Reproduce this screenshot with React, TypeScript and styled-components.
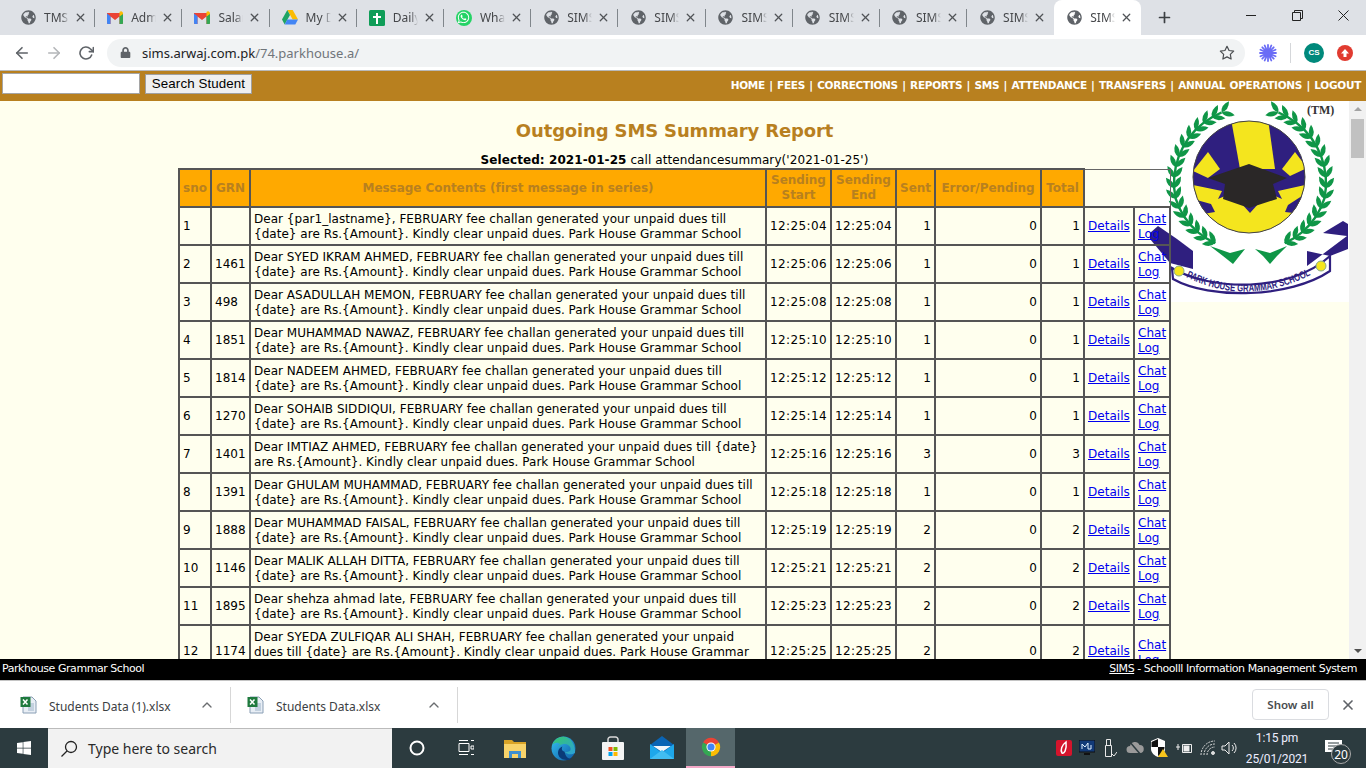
import React from "react";
import styled, { createGlobalStyle } from "styled-components";
import { FaGlobeAmericas, FaWhatsapp, FaLock, FaWindows } from "react-icons/fa";
import { FiArrowLeft, FiArrowRight, FiRotateCw, FiStar, FiX, FiPlus, FiChevronUp } from "react-icons/fi";

const Global = createGlobalStyle`
  html, body { margin: 0; padding: 0; height: 100%; overflow: hidden; background: #fff; }
  #root { height: 100%; }
  * { box-sizing: border-box; }
`;

const Frame = styled.div`
  height: 768px; width: 1366px; display: flex; flex-direction: column; overflow: hidden;
  font-family: "Noto Sans", "Open Sans", sans-serif;
`;
const TabStrip = styled.div`
  height: 35px; flex: none; background: #dee1e6; display: flex; align-items: stretch; padding: 0 0 0 8px; position: relative;
`;
const Tab = styled.div<{ $active?: boolean; $last?: boolean }>`
  width: 87.2px; flex: none; display: flex; align-items: center; padding-left: 12px; position: relative;
  background: ${(p) => (p.$active ? "#fff" : "transparent")};
  border-radius: ${(p) => (p.$active ? "8px 8px 0 0" : "0")};
  &::after {
    content: ""; position: absolute; right: 0; top: 9px; height: 18px; width: 1px;
    background: ${(p) => (p.$last || p.$active ? "transparent" : "#80868b")};
  }
`;
const TabIcon = styled.span`
  width: 16px; height: 16px; display: flex; align-items: center; justify-content: center; flex: none; color: #5f6368;
`;
const TabTitle = styled.span`
  width: 25px; margin-left: 8px; overflow: hidden; white-space: nowrap; font-size: 12px; color: #45474a;
  -webkit-mask-image: linear-gradient(90deg, #000 70%, transparent 100%);
  mask-image: linear-gradient(90deg, #000 70%, transparent 100%);
`;
const TabClose = styled.span`
  margin-left: 5px; display: flex; color: #505357;
`;
const WhatsBadge = styled.span`
  width: 16px; height: 16px; border-radius: 50%; background: #25d366; color: #fff; display: flex; align-items: center; justify-content: center;
`;
const NewTab = styled.span`
  width: 30px; margin-left: 8px; display: flex; align-items: center; justify-content: center; color: #3c4043;
`;
const WinControls = styled.div`
  margin-left: auto; display: flex; align-items: flex-start; height: 100%;
`;
const WinBtn = styled.span`
  width: 46px; height: 30px; display: flex; align-items: center; justify-content: center; color: #222;
`;
const Toolbar = styled.div`
  height: 36px; flex: none; background: #fff; display: flex; align-items: center; padding-left: 12px;
  border-bottom: 1px solid #b9b9b9;
`;
const NavBtn = styled.span<{ $off?: boolean }>`
  width: 20px; margin-right: 12px; display: flex; align-items: center; justify-content: center;
  color: ${(p) => (p.$off ? "#b4b6b9" : "#5f6368")};
`;
const Omnibox = styled.div`
  margin-left: -1px; width: 1138px; height: 28px; border-radius: 14px; background: #f1f3f4; display: flex; align-items: center; padding: 0 10px 0 13px;
  font-size: 13px; color: #202124;
`;
const UrlHost = styled.span`
  margin-left: 11px; color: #202124;
`;
const UrlPath = styled.span`
  color: #70757a;
`;
const OmniStar = styled.span`
  margin-left: auto; display: flex; color: #4a4d50;
`;
const ToolIcons = styled.div`
  display: flex; align-items: center; margin-left: 14px; gap: 0;
`;
const ToolDivider = styled.span`
  width: 1px; height: 20px; background: #d5d7da; margin: 0 13px;
`;
const Avatar = styled.span`
  width: 20px; height: 20px; border-radius: 50%; background: #00897b; color: #fff; font-size: 8px; font-weight: 700; display: flex; align-items: center; justify-content: center; font-family: "Liberation Sans", sans-serif;
`;
const UpCircle = styled.span`
  width: 16px; height: 16px; margin-left: 13px; border-radius: 50%; background: #e13b30; display: flex; align-items: center; justify-content: center;
`;

const Page = styled.div`
  flex: 1; min-height: 0; display: flex; flex-direction: column;
`;
const TopBar = styled.div`
  height: 30px; flex: none; background: #b8801f; display: flex; align-items: center; padding: 0 5px 0 2px; justify-content: space-between;
`;
const SearchForm = styled.form`
  display: flex; align-items: center; gap: 5px; margin: -5px 0 0;
`;
const SearchInput = styled.input`
  width: 138px; height: 21px; border: 1px solid #a5a5a5; background: #fff; padding: 0;
`;
const SearchButton = styled.button`
  height: 20px; width: 107px; padding: 0; border: 1px solid #a0a0a0; background: #efefef; font: 13.33px "Liberation Sans", Arial, sans-serif; color: #000; letter-spacing: .1px;
`;
const Nav = styled.div`
  color: #fff; font: bold 10.5px "DejaVu Sans", Verdana, sans-serif; letter-spacing: -.3px; white-space: nowrap; word-spacing: 1px; margin-top: -2px;
`;
const Body = styled.div`
  flex: 1; min-height: 0; display: flex; background: #ffffee; position: relative;
`;
const Scroller = styled.div`
  flex: 1; min-width: 0; overflow: hidden; position: relative;
`;
const Logo = styled.svg`
  position: absolute; right: 0; top: 0; width: 199px; height: 201px; background: #fff;
`;
const Content = styled.div`
  position: relative; z-index: 1; padding-top: 19px; font: 12px "DejaVu Sans", Verdana, sans-serif; color: #000;
`;
const Title = styled.h1`
  margin: 0; text-align: center; font: bold 18px/22px "DejaVu Sans", Verdana, sans-serif; color: #b8801f; letter-spacing: -.15px;
`;
const Selected = styled.div`
  margin-top: 11px; text-align: center; line-height: 15px; font-size: 12px; height: 15px; letter-spacing: .08px;
`;
const Table = styled.table`
  margin: 0 0 0 178px; width: 991px; table-layout: fixed; border-collapse: collapse; border: 1px solid #666;
  font: 12px/15px "DejaVu Sans", Verdana, sans-serif; letter-spacing: .025px;
`;
const Th = styled.th`
  background: #ffa900; color: #b8801f; border: 2px solid #555; padding: 3px 1px; font-weight: 700; text-align: center; height: 38px; letter-spacing: -.05px;
`;
const Td = styled.td<{ $right?: boolean; $time?: boolean; $multi?: boolean }>`
  border: 2px solid #555; padding: ${(p) => (p.$multi ? "4px 3px 2px" : "3px")}; text-align: ${(p) => (p.$right ? "right" : "left")}; white-space: nowrap; height: 38px; vertical-align: middle; overflow: hidden;
  ${(p) => (p.$time ? "letter-spacing: .4px;" : "")}
`;
const LinkA = styled.a`
  color: #0000ee; text-decoration: underline;
`;
const Scrollbar = styled.div`
  width: 17px; flex: none; background: #f1f1f1; position: relative; display: flex; flex-direction: column; align-items: center;
`;
const ArrowUp = styled.span`
  margin-top: 6px; width: 0; height: 0; border-left: 4px solid transparent; border-right: 4px solid transparent; border-bottom: 4px solid #a3a3a3;
`;
const Thumb = styled.span`
  width: 13px; height: 39px; margin-top: 8px; background: #c1c1c1;
`;
const ArrowDown = styled.span`
  margin-top: auto; margin-bottom: 6px; width: 0; height: 0; border-left: 4px solid transparent; border-right: 4px solid transparent; border-top: 4px solid #505050;
`;
const Footer = styled.div`
  height: 21px; flex: none; background: #000; color: #fff; font: 11px "DejaVu Sans", Verdana, sans-serif; letter-spacing: -.45px; display: flex; align-items: center; justify-content: space-between; padding: 0 9px 2px 2px;
`;
const FootLink = styled.span`
  text-decoration: underline;
`;
const Shelf = styled.div`
  height: 48px; flex: none; background: #fff; border-top: 1px solid #c4c4c4; display: flex; align-items: center;
`;
const ShelfItem = styled.div`
  width: 227px; height: 36px; flex: none; display: flex; align-items: center; padding-left: 16px; border-right: 1px solid #d7d7d7; position: relative; font-size: 12px; color: #3c4043;
  &:first-child { width: 231px; padding-left: 20px; }
`;
const ShelfName = styled.span`
  margin-left: 12px; width: 150px; white-space: nowrap; padding-top: 3px;
`;
const ShelfChevron = styled.span`
  display: flex; color: #6a6d70;
`;
const ShowAll = styled.button`
  margin-left: auto; width: 77px; height: 31px; background: #fff; border: 1px solid #dadce0; border-radius: 4px; font: 600 11.5px "Noto Sans", sans-serif; color: #4a4d50; padding: 0;
`;
const ShelfClose = styled.span`
  width: 37px; display: flex; justify-content: center; color: #5f6368;
`;
const Taskbar = styled.div`
  height: 40px; flex: none; background: #2c3b3f; display: flex; align-items: stretch; color: #fff;
`;
const StartBtn = styled.span`
  width: 48px; display: flex; align-items: center; justify-content: center;
`;
const SearchBox = styled.div`
  width: 344px; background: #f2f2f2; color: #2a2a2a; display: flex; align-items: center; padding-left: 12px; font-size: 14px; border: 1px solid #bbb; border-width: 1px 0 0;
`;
const SearchLabel = styled.span`
  margin-left: 10px;
`;
const TaskIcons = styled.div`
  display: flex; align-items: stretch;
`;
const TaskIcon = styled.span<{ $active?: boolean }>`
  width: 49px; display: flex; align-items: center; justify-content: center; position: relative;
  background: ${(p) => (p.$active ? "#55676b" : "transparent")};
  ${(p) => (p.$active ? "border-bottom: 2px solid #f4a9c8;" : "")}
`;
const Tray = styled.div`
  margin-left: auto; display: flex; align-items: stretch; gap: 0;
`;
const TrayIcon = styled.span<{ $w: number }>`
  width: ${(p) => p.$w}px; display: flex; align-items: center; justify-content: center;
`;
const Clock = styled.div`
  width: 76px; text-align: center; font: 12px/21px Roboto, "Noto Sans", sans-serif; letter-spacing: -.15px; color: #eef; white-space: nowrap;
`;
const Notify = styled.span`
  width: 51px; display: flex; align-items: flex-start; padding: 12px 0 0 10px; position: relative;
`;
const NotifyCount = styled.span`
  position: absolute; left: 16px; top: 16px; width: 20px; height: 20px; border-radius: 50%; background: #2c3b3f; border: 1px solid #aaa; font-size: 12px; display: flex; align-items: center; justify-content: center;
`;

const Globe = () => <FaGlobeAmericas size={15} />;
const Gmail = () => (
  <svg width="16" height="13" viewBox="0 0 16 13">
    <path d="M0 2v10a1 1 0 0 0 1 1h2.500V5.500L8 9l4.500-3.500V13H15a1 1 0 0 0 1-1V2z" fill="#ea4335" />
    <path d="M0 2.500 L0 12a1 1 0 0 0 1 1h2.500V5.200z" fill="#4285f4" />
    <path d="M16 2.500 V12a1 1 0 0 1-1 1h-2.500V5.200z" fill="#34a853" />
    <path d="M16 2.200a2 2 0 0 0-3.200-1.500L12.500 1v4.500L16 3z" fill="#fbbc04" />
  </svg>
);
const Drive = () => (
  <svg width="16" height="15" viewBox="0 0 16 15">
    <path d="M5.300 0h5.400l5.300 9.500h-5.300z" fill="#fbbc04" />
    <path d="M5.300 0 0 9.500 2.700 14.500 8 5z" fill="#1fa463" />
    <path d="M2.700 14.500h10.600L16 9.500H5.300z" fill="#4285f4" />
  </svg>
);
const Sheets = () => (
  <svg width="16" height="16" viewBox="0 0 16 16">
    <rect width="16" height="16" rx="1.500" fill="#0f9d58" />
    <path d="M7 3h2v3h3v2H9v6H7V8H4V6h3z" fill="#fff" />
  </svg>
);
const Whats = () => (
  <WhatsBadge><FaWhatsapp size={13} /></WhatsBadge>
);
const Chrome = () => (
  <svg width="22" height="22" viewBox="0 0 48 48">
    <path d="M24 24 6.680 14A20 20 0 0 1 41.320 14z" fill="#ea4335" />
    <path d="M24 24 41.320 14A20 20 0 0 1 24 44z" fill="#fbbc04" />
    <path d="M24 24V44A20 20 0 0 1 6.680 14z" fill="#34a853" />
    <circle cx="24" cy="24" r="10" fill="#fff" />
    <circle cx="24" cy="24" r="7.800" fill="#4285f4" />
  </svg>
);
const Edge = () => (
  <svg width="25" height="25" viewBox="0 0 24 24">
    <defs>
      <linearGradient id="ed1" x1="0" y1="0" x2="1" y2="1">
        <stop offset="0" stopColor="#35c1f1" />
        <stop offset="1" stopColor="#0c59a4" />
      </linearGradient>
      <linearGradient id="ed2" x1="0" y1="0" x2="1" y2="1">
        <stop offset="0" stopColor="#36c96b" />
        <stop offset="1" stopColor="#2ba0d8" />
      </linearGradient>
    </defs>
    <circle cx="12" cy="12" r="11.500" fill="url(#ed1)" />
    <path d="M6 13c1-5 7-7 11-4 2 1.500 2.500 4 1 5.500-1 1-3.500 1-5 .3 2 2.500 6 4 10 1.500C24 9 19 1 12 .6 6 .6 2 5 1.500 9 2.500 6 7 5.500 9 8 7.500 9 6.300 11 6 13z" fill="url(#ed2)" />
    <path d="M13 15c-3-1-3-3-2-5 -3 1-5 4-4 8 1 3 4 5 8 5 2 0 3.500-.5 5-1.500-3 .8-6-1.500-7-6.500z" fill="#0a3a78" />
  </svg>
);
const Store = () => (
  <svg width="24" height="25" viewBox="0 0 24 25">
    <path d="M7 7V3.500a2.500 2.500 0 0 1 2.500-2.500h5A2.500 2.500 0 0 1 17 3.500V7" fill="none" stroke="#d8d8d8" strokeWidth="1.500" />
    <rect x="1" y="6" width="22" height="18" rx="1" fill="#f4f4f4" />
    <rect x="7.500" y="11" width="4" height="4" fill="#f25022" />
    <rect x="12.500" y="11" width="4" height="4" fill="#7fba00" />
    <rect x="7.500" y="16" width="4" height="4" fill="#00a4ef" />
    <rect x="12.500" y="16" width="4" height="4" fill="#ffb900" />
  </svg>
);
const Mail = () => (
  <svg width="24" height="24" viewBox="0 0 24 24">
    <path d="M0 9 12 0l12 9v14H0z" fill="#0a64b4" />
    <path d="M3 10h18l-9 6z" fill="#f2f6fa" />
    <path d="M0 8l12 9 12-9v15H0z" fill="#1ea7ea" />
    <path d="M0 23l12-9 12 9z" fill="#41bdf2" />
  </svg>
);
const Folder = () => (
  <svg width="22" height="19" viewBox="0 0 22 19">
    <path d="M0 1h8l2 2h12v4H0z" fill="#d9a327" />
    <rect y="5" width="22" height="14" fill="#f8d36a" />
    <path d="M5 12h12v7h-3v-4H8v4H5z" fill="#3d8fd1" />
  </svg>
);
const Excel = () => (
  <svg width="17" height="18" viewBox="0 0 17 18">
    <path d="M3 1h9l4 4v12H3z" fill="#e8eef5" stroke="#8a9fb5" />
    <path d="M8 8h6M8 10h6M8 12h6M8 14h6" stroke="#9db3c9" />
    <rect x="0.500" y="1" width="10" height="10" fill="#1f7a3e" />
    <path d="M3 3.500l4.500 5M7.500 3.500 3 8.500" stroke="#fff" strokeWidth="1.500" />
  </svg>
);

const GREEN = "#0f9647";
const NAVY = "#2f1f7f";
const YELLOW = "#f4e51e";
const LEAF = "M0 0Q6-5 13.500 0Q6 5 0 0z";

function LaurelSide({ mirror }: { mirror?: boolean }) {
  const cx = 100, cy = 82, r = 76;
  const nodes: React.ReactNode[] = [];
  const pts: string[] = [];
  for (let i = 0; i < 17; i++) {
    const th = 22 + i * 8;
    const rad = (th * Math.PI) / 180;
    const rr = r - (i > 10 ? (i - 10) * 1.100 : 0);
    const x = cx - rr * Math.sin(rad);
    const y = cy - rr * Math.cos(rad);
    pts.push(`${x.toFixed(1)} ${y.toFixed(1)}`);
    nodes.push(
      <g key={i} transform={`translate(${x.toFixed(1)} ${y.toFixed(1)}) rotate(${(-th).toFixed(1)})`}>
        <path d={LEAF} transform="rotate(-34)" fill={GREEN} />
        <path d={LEAF} transform="rotate(34)" fill={GREEN} />
      </g>
    );
  }
  return (
    <g transform={mirror ? `translate(${2 * cx} 0) scale(-1 1)` : undefined}>
      <polyline points={pts.join(" ")} fill="none" stroke={GREEN} strokeWidth="2.400" />
      {nodes}
    </g>
  );
}

const NAV = ["HOME", "FEES", "CORRECTIONS", "REPORTS", "SMS", "ATTENDANCE", "TRANSFERS", "ANNUAL OPERATIONS", "LOGOUT"];
const TAIL = "{date} are Rs.{Amount}. Kindly clear unpaid dues. Park House Grammar School";
const H = "FEBRUARY fee challan generated your unpaid dues till";
type Row = { sno: number; grn: string; lines: string[]; t: string; sent: number };
const ROWS: Row[] = [
  { sno: 1, grn: "", lines: [`Dear {par1_lastname}, ${H}`, TAIL], t: "12:25:04", sent: 1 },
  { sno: 2, grn: "1461", lines: [`Dear SYED IKRAM AHMED, ${H}`, TAIL], t: "12:25:06", sent: 1 },
  { sno: 3, grn: "498", lines: [`Dear ASADULLAH MEMON, ${H}`, TAIL], t: "12:25:08", sent: 1 },
  { sno: 4, grn: "1851", lines: [`Dear MUHAMMAD NAWAZ, ${H}`, TAIL], t: "12:25:10", sent: 1 },
  { sno: 5, grn: "1814", lines: [`Dear NADEEM AHMED, ${H}`, TAIL], t: "12:25:12", sent: 1 },
  { sno: 6, grn: "1270", lines: [`Dear SOHAIB SIDDIQUI, ${H}`, TAIL], t: "12:25:14", sent: 1 },
  { sno: 7, grn: "1401", lines: [`Dear IMTIAZ AHMED, ${H} {date}`, "are Rs.{Amount}. Kindly clear unpaid dues. Park House Grammar School"], t: "12:25:16", sent: 3 },
  { sno: 8, grn: "1391", lines: [`Dear GHULAM MUHAMMAD, ${H}`, TAIL], t: "12:25:18", sent: 1 },
  { sno: 9, grn: "1888", lines: [`Dear MUHAMMAD FAISAL, ${H}`, TAIL], t: "12:25:19", sent: 2 },
  { sno: 10, grn: "1146", lines: [`Dear MALIK ALLAH DITTA, ${H}`, TAIL], t: "12:25:21", sent: 2 },
  { sno: 11, grn: "1895", lines: [`Dear shehza ahmad late, ${H}`, TAIL], t: "12:25:23", sent: 2 },
  { sno: 12, grn: "1174", lines: ["Dear SYEDA ZULFIQAR ALI SHAH, FEBRUARY fee challan generated your unpaid", "dues till {date} are Rs.{Amount}. Kindly clear unpaid dues. Park House Grammar", "School"], t: "12:25:25", sent: 2 },
];
const TABS: [React.ReactNode, string][] = [
  [<Globe />, "TMS"], [<Gmail />, "Admin"], [<Gmail />, "Salary"], [<Drive />, "My Drive"], [<Sheets />, "Daily"], [<Whats />, "WhatsApp"],
  [<Globe />, "SIMS"], [<Globe />, "SIMS"], [<Globe />, "SIMS"], [<Globe />, "SIMS"], [<Globe />, "SIMS"], [<Globe />, "SIMS"], [<Globe />, "SIMS"],
];
const COLS = [32, 39, 516, 65, 65, 39, 106, 43, 50, 36];

export default function App() {
  return (
    <Frame>
      <Global />
      <TabStrip>
        {TABS.map(([icon, title], i) => (
          <Tab key={i} $active={i === 12} $last={i === 11}>
            <TabIcon>{icon}</TabIcon>
            <TabTitle>{title}</TabTitle>
            <TabClose><FiX size={13} strokeWidth={2.4} /></TabClose>
          </Tab>
        ))}
        <NewTab><FiPlus size={17} strokeWidth={2.4} /></NewTab>
        <WinControls>
          <WinBtn><svg width="10" height="10"><path d="M0 5.500h10" stroke="#222" /></svg></WinBtn>
          <WinBtn><svg width="11" height="11"><path d="M.5 2.500h8v8h-8zM2.500 2.500v-2h8v8h-2" fill="none" stroke="#222" /></svg></WinBtn>
          <WinBtn><svg width="11" height="11"><path d="M.5.500l10 10M10.500.500l-10 10" stroke="#222" /></svg></WinBtn>
        </WinControls>
      </TabStrip>
      <Toolbar>
        <NavBtn><FiArrowLeft size={18} strokeWidth={2.2} /></NavBtn>
        <NavBtn $off><FiArrowRight size={18} strokeWidth={2.2} /></NavBtn>
        <NavBtn><FiRotateCw size={16} strokeWidth={2.4} /></NavBtn>
        <Omnibox>
          <FaLock size={11} color="#5f6368" />
          <UrlHost>sims.arwaj.com.pk</UrlHost><UrlPath>/74.parkhouse.a/</UrlPath>
          <OmniStar><FiStar size={16} strokeWidth={1.8} /></OmniStar>
        </Omnibox>
        <ToolIcons>
          <svg width="18" height="18" viewBox="0 0 18 18" stroke="#6a6cf6" strokeWidth="1.800" strokeLinecap="round">
            <path d="M9 1v16M1 9h16M3.300 3.300l11.400 11.400M14.700 3.300 3.300 14.700M5.700 1.500l6.600 15M12.300 1.500l-6.600 15M1.500 5.700l15 6.600M1.500 12.300l15-6.600" />
          </svg>
          <ToolDivider />
          <Avatar>CS</Avatar>
          <UpCircle>
            <svg width="10" height="10" viewBox="0 0 10 10"><path d="M5 1 9 5.500H6.500V9h-3V5.500H1z" fill="#fff" /></svg>
          </UpCircle>
        </ToolIcons>
      </Toolbar>
      <Page>
        <TopBar>
          <SearchForm>
            <SearchInput aria-label="Search" />
            <SearchButton type="button">Search Student</SearchButton>
          </SearchForm>
          <Nav>{NAV.join(" | ")}</Nav>
        </TopBar>
        <Body>
          <Scroller>
            <Logo viewBox="0 0 199 201">
              <defs>
                <clipPath id="disc"><circle cx="99" cy="76" r="56" /></clipPath>
                <path id="band" d="M36 176 Q100 208 168 170" fill="none" />
              </defs>
              <LaurelSide />
              <LaurelSide mirror />
              <g clipPath="url(#disc)">
                <rect x="40" y="18" width="120" height="120" fill={NAVY} />
                <path d="M81 18h37l7 50H90z" fill={YELLOW} />
                <path d="M43 70 58 51l12 17-12 9z" fill={YELLOW} />
                <path d="M132 68l13-17 12 16-17 8z" fill={YELLOW} />
                <path d="M43 84l29 6-4 8 14-6 18 20 18-20 14 6-4-8 27-6v50H43z" fill={YELLOW} />
                <path d="M43 98l18 5 4 8-18 3z" fill={NAVY} />
                <path d="M155 93l-17 11-3 7 17 2z" fill={NAVY} />
              </g>
              <circle cx="99" cy="76" r="56" fill="none" stroke="#444" strokeWidth="1" />
              <path d="M99 63 58 77l17 6-2 15 26 9 28-9-4-15 14-6z" fill="#2a2727" />
              <path d="M60 145l20 7 15-4-12 15-10-8zM137 145l-17 7-15-4 8 7 7 8 7-8z" fill={GREEN} />
              <path d="M0 132l8-7 19 13 16 12v18l-23-6-20-24z" fill={NAVY} />
              <path d="M173 132l20-12 5 3v25l-18 7-23-5v15l40-30z" fill={NAVY} />
              <path d="M22 167C60 190 140 192 180 155L180 170C140 197 60 199 23 178z" fill="#fff" stroke={NAVY} strokeWidth="2.200" />
              <circle cx="29" cy="170" r="5" fill={YELLOW} stroke="#8a8" />
              <circle cx="171" cy="165" r="5" fill={YELLOW} stroke="#8a8" />
              <text fontFamily="'Liberation Sans', sans-serif" fontWeight="700" fontSize="10.500" fill={NAVY}>
                <textPath href="#band" textLength="130" lengthAdjust="spacingAndGlyphs">PARK HOUSE GRAMMAR SCHOOL</textPath>
              </text>
              <text x="157" y="13" fontFamily="'Liberation Serif', serif" fontWeight="700" fontSize="12" fill="#333">(TM)</text>
            </Logo>
            <Content>
              <Title>Outgoing SMS Summary Report</Title>
              <Selected><b>Selected: 2021-01-25</b> call attendancesummary('2021-01-25')</Selected>
              <Table>
                <colgroup>{COLS.map((w, i) => <col key={i} style={{ width: w }} />)}</colgroup>
                <thead>
                  <tr>
                    <Th>sno</Th><Th>GRN</Th><Th>Message Contents (first message in series)</Th>
                    <Th>Sending<br />Start</Th><Th>Sending<br />End</Th><Th>Sent</Th><Th>Error/Pending</Th><Th>Total</Th>
                  </tr>
                </thead>
                <tbody>
                  {ROWS.map((r) => (
                    <tr key={r.sno}>
                      <Td>{r.sno}</Td>
                      <Td>{r.grn}</Td>
                      <Td $multi>{r.lines.map((l, i) => <React.Fragment key={i}>{i > 0 && <br />}{l}</React.Fragment>)}</Td>
                      <Td $time>{r.t}</Td>
                      <Td $time>{r.t}</Td>
                      <Td $right>{r.sent}</Td>
                      <Td $right>0</Td>
                      <Td $right>{r.sent}</Td>
                      <Td><LinkA href="#">Details</LinkA></Td>
                      <Td $multi><LinkA href="#">Chat<br />Log</LinkA></Td>
                    </tr>
                  ))}
                </tbody>
              </Table>
            </Content>
          </Scroller>
          <Scrollbar><ArrowUp /><Thumb /><ArrowDown /></Scrollbar>
        </Body>
        <Footer>
          <span>Parkhouse Grammar School</span>
          <span><FootLink>SIMS</FootLink> - Schoolll Information Management System</span>
        </Footer>
      </Page>
      <Shelf>
        <ShelfItem><Excel /><ShelfName>Students Data (1).xlsx</ShelfName><ShelfChevron><FiChevronUp size={16} /></ShelfChevron></ShelfItem>
        <ShelfItem><Excel /><ShelfName>Students Data.xlsx</ShelfName><ShelfChevron><FiChevronUp size={16} /></ShelfChevron></ShelfItem>
        <ShowAll type="button">Show all</ShowAll>
        <ShelfClose><FiX size={16} strokeWidth={2.5} /></ShelfClose>
      </Shelf>
      <Taskbar>
        <StartBtn><FaWindows size={16} color="#fff" /></StartBtn>
        <SearchBox>
          <svg width="18" height="18" viewBox="0 0 18 18" fill="none" stroke="#222" strokeWidth="1.300"><circle cx="11" cy="7" r="5.500" /><path d="M7 11 1.500 16.500" /></svg>
          <SearchLabel>Type here to search</SearchLabel>
        </SearchBox>
        <TaskIcons>
          <TaskIcon><svg width="16" height="16"><circle cx="8" cy="8" r="6.500" fill="none" stroke="#fff" strokeWidth="2" /></svg></TaskIcon>
          <TaskIcon><svg width="16" height="16" fill="none" stroke="#fff"><path d="M1 .5h9M1 3.500h10v8H1zM1 14.500h9M13 .5h3M13 14.500h3M13 6h3v3h-3z" /></svg></TaskIcon>
          <TaskIcon><Folder /></TaskIcon>
          <TaskIcon><Edge /></TaskIcon>
          <TaskIcon><Store /></TaskIcon>
          <TaskIcon><Mail /></TaskIcon>
          <TaskIcon $active><Chrome /></TaskIcon>
        </TaskIcons>
        <Tray>
          <TrayIcon $w={22}><svg width="16" height="16"><rect width="16" height="16" rx="2" fill="#d5142c" /><path d="M10 2c-4 3-6 8-4 11 2 1 5-3 4-11z" fill="none" stroke="#fff" strokeWidth="1.500" /></svg></TrayIcon>
          <TrayIcon $w={23}><svg width="16" height="16"><rect width="16" height="12" fill="#123a78" stroke="#111" /><path d="M3 9V4l3 3 3-4v6h3V5" stroke="#dfefff" fill="none" /><path d="M5 13h6v2H5z" fill="#111" /></svg></TrayIcon>
          <TrayIcon $w={24}><svg width="14" height="20" fill="none" stroke="#e8e8e8"><path d="M2.500 7.500h6v11h-6zM3.500 1.500h4v6h-4zM9 16l2 2 3-4" /></svg></TrayIcon>
          <TrayIcon $w={25}><svg width="18" height="16"><path d="M4 13a3.500 3.500 0 0 1 0-7 5 5 0 0 1 9.500-1A4 4 0 0 1 14 13z" fill="#9a9a9a" /><path d="M3 1l12 14" stroke="#2c3b3f" strokeWidth="1.500" /></svg></TrayIcon>
          <TrayIcon $w={24}><svg width="18" height="20"><path d="M1 3l7-3 7 3v8c0 4-4 7-7 8-3-1-7-4-7-8z" fill="#fff" /><path d="M1.500 4 8 1v8H1.500zM8 9h6.500c0 4-3 7-6.500 9z" fill="#111" /><path d="M13 11l5 8h-10z" fill="#f8c51c" /></svg></TrayIcon>
          <TrayIcon $w={25}><svg width="18" height="14" fill="none" stroke="#eee"><path d="M7.500 3.500h9v8h-9zM1 6h4M3 3v6" /><rect x="9" y="5" width="5" height="5" fill="#eee" /></svg></TrayIcon>
          <TrayIcon $w={24}><svg width="16" height="16" fill="none" stroke="#ddd"><path d="M1 15a14 14 0 0 1 14-14M4 15a11 11 0 0 1 11-11M7 15a8 8 0 0 1 8-8" strokeDasharray="2 1" /><circle cx="13" cy="13" r="1.500" fill="#ddd" /></svg></TrayIcon>
          <TrayIcon $w={19}><svg width="17" height="16" fill="none" stroke="#eee"><path d="M1 6v4h3l4 4V2L4 6zM11 5a4 4 0 0 1 0 6M13 3a7 7 0 0 1 0 10" /></svg></TrayIcon>
          <Clock>1:15 pm<br />25/01/2021</Clock>
          <Notify>
            <svg width="17" height="14"><path d="M0 0h17v12H0z" fill="#fff" /><path d="M3 3h11M3 6h11M3 9h7" stroke="#2c3b3f" /></svg>
            <NotifyCount>20</NotifyCount>
          </Notify>
        </Tray>
      </Taskbar>
    </Frame>
  );
}
